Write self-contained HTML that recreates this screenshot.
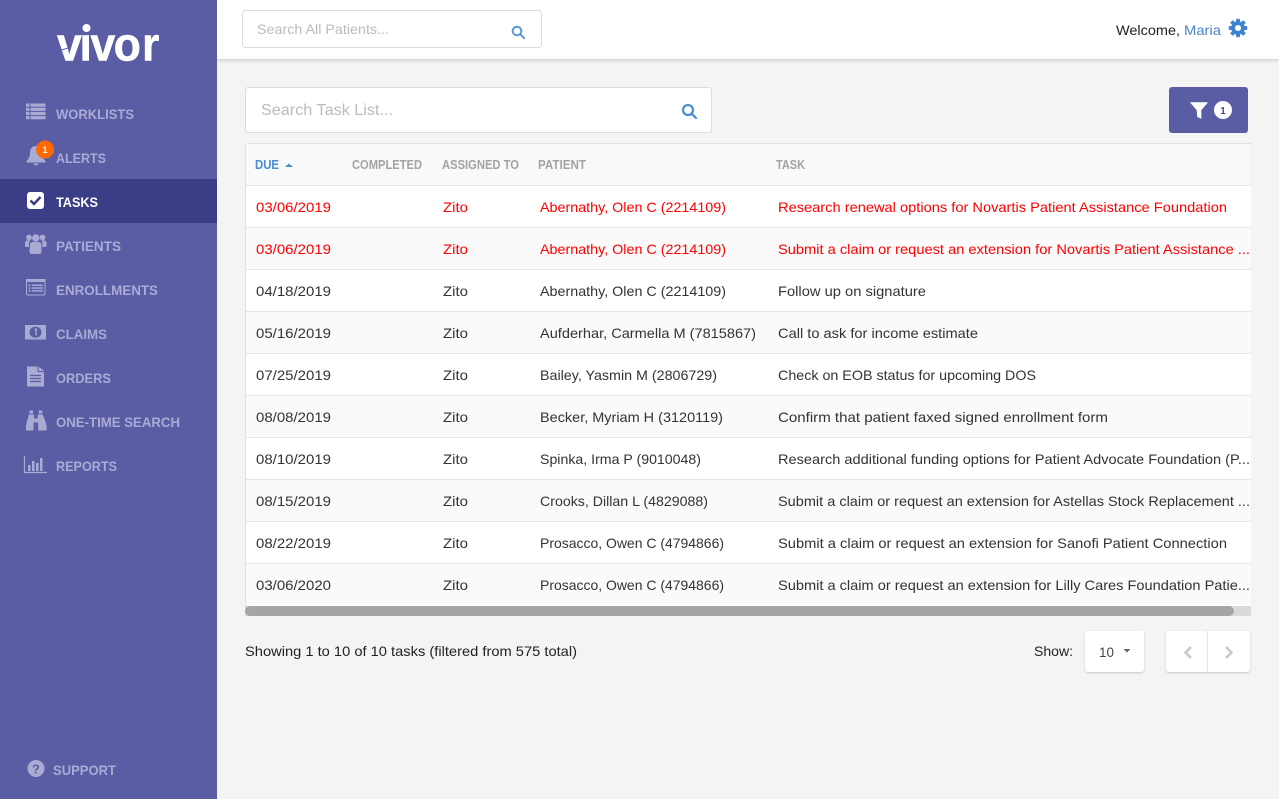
<!DOCTYPE html>
<html lang="en">
<head>
<meta charset="utf-8">
<title>Vivor Tasks</title>
<style>
html,body{margin:0;padding:0;width:1279px;height:799px;overflow:hidden;background:#f4f4f4}
svg{display:block;position:absolute;left:0;top:0}
text{font-family:"Liberation Sans",sans-serif;font-size:14px;fill:#333}
.nav{font-weight:bold;font-size:14px;fill:#a9abd4}
.th{font-weight:bold;font-size:13px;fill:#a3a3a3}
.r{fill:#f00}
</style>
</head>
<body>
<svg width="1279" height="799" viewBox="0 0 1279 799" xmlns="http://www.w3.org/2000/svg">
<defs>
<filter id="sh" x="-5%" y="-20%" width="110%" height="150%"><feDropShadow dx="0" dy="1" stdDeviation="2" flood-color="#000" flood-opacity=".2"/></filter>
<filter id="sh2" x="-20%" y="-20%" width="140%" height="140%"><feDropShadow dx="0" dy="1" stdDeviation="1" flood-color="#000" flood-opacity=".18"/></filter>
</defs>

<!-- top bar -->
<rect x="217" y="0" width="1062" height="59" fill="#fff" filter="url(#sh)"/>
<rect x="242.500" y="10.500" width="299" height="37" rx="3" fill="#fff" stroke="#dcdcdc"/>
<text x="257" y="34" textLength="132" lengthAdjust="spacingAndGlyphs" style="fill:#bbb">Search All Patients...</text>
<g fill="none" stroke="#5b9bd5" stroke-width="2"><circle cx="517" cy="31" r="4.300"/><path d="M520.200 34.200l4 4" stroke-linecap="round"/></g>
<text x="1116" y="35" textLength="64" lengthAdjust="spacingAndGlyphs" style="fill:#222">Welcome,</text>
<text x="1184" y="35" textLength="37" lengthAdjust="spacingAndGlyphs" style="fill:#4a86c5">Maria</text>
<g transform="translate(1238 28)">
  <g fill="#3f84cc"><circle r="6.800"/>
  <rect x="-2" y="-9.300" width="4" height="18.600" rx="1"/>
  <rect x="-2" y="-9.300" width="4" height="18.600" rx="1" transform="rotate(45)"/>
  <rect x="-2" y="-9.300" width="4" height="18.600" rx="1" transform="rotate(90)"/>
  <rect x="-2" y="-9.300" width="4" height="18.600" rx="1" transform="rotate(135)"/></g>
  <circle r="3" fill="#fff"/>
</g>

<!-- task search -->
<rect x="245.500" y="87.500" width="466" height="45" rx="3" fill="#fff" stroke="#dcdcdc"/>
<text x="261" y="115" textLength="132" lengthAdjust="spacingAndGlyphs" style="font-size:16px;fill:#bbb">Search Task List...</text>
<g fill="none" stroke="#4a8cd0" stroke-width="2.200"><circle cx="688" cy="110" r="5"/><path d="M691.800 113.800l4.200 4.200" stroke-linecap="round"/></g>

<!-- filter button -->
<rect x="1169" y="87" width="79" height="46" rx="3" fill="#5a5da4"/>
<path d="M1190.500 102.500h17l-6.500 7.500v8.500l-3.500-1.800-.5-6.700z" fill="#fff" stroke="#fff" stroke-width=".6" stroke-linejoin="round"/>
<circle cx="1223" cy="110" r="9" fill="#fff"/>
<text x="1223" y="114" text-anchor="middle" style="font-size:10px;font-weight:bold;fill:#4a4d8c">1</text>

<!-- table -->
<rect x="245.500" y="143.500" width="1010" height="463" rx="3" fill="#fff" stroke="#e2e2e2"/>
<rect x="246" y="144" width="1005" height="41" fill="#f8f9fb"/>
<rect x="246" y="228" width="1005" height="41" fill="#fafafa"/>
<rect x="246" y="312" width="1005" height="41" fill="#fafafa"/>
<rect x="246" y="396" width="1005" height="41" fill="#fafafa"/>
<rect x="246" y="480" width="1005" height="41" fill="#fafafa"/>
<rect x="246" y="564" width="1005" height="41" fill="#fafafa"/>
<g fill="#e6e6e6">
<rect x="246" y="185" width="1005" height="1"/><rect x="246" y="227" width="1005" height="1"/>
<rect x="246" y="269" width="1005" height="1"/><rect x="246" y="311" width="1005" height="1"/>
<rect x="246" y="353" width="1005" height="1"/><rect x="246" y="395" width="1005" height="1"/>
<rect x="246" y="437" width="1005" height="1"/><rect x="246" y="479" width="1005" height="1"/>
<rect x="246" y="521" width="1005" height="1"/><rect x="246" y="563" width="1005" height="1"/>
</g>
<rect x="1251" y="140" width="28" height="480" fill="#f4f4f4"/>

<text class="th" x="255" y="169" textLength="24" lengthAdjust="spacingAndGlyphs" style="fill:#4a8cd0">DUE</text>
<path d="M285 167h8l-4-3.500z" fill="#4a8cd0"/>
<text class="th" x="352" y="169" textLength="70" lengthAdjust="spacingAndGlyphs">COMPLETED</text>
<text class="th" x="442" y="169" textLength="77" lengthAdjust="spacingAndGlyphs">ASSIGNED TO</text>
<text class="th" x="538" y="169" textLength="48" lengthAdjust="spacingAndGlyphs">PATIENT</text>
<text class="th" x="776" y="169" textLength="29" lengthAdjust="spacingAndGlyphs">TASK</text>

<text class="r" x="256" y="212" textLength="75" lengthAdjust="spacingAndGlyphs">03/06/2019</text>
<text class="r" x="443" y="212" textLength="25" lengthAdjust="spacingAndGlyphs">Zito</text>
<text class="r" x="540" y="212" textLength="186" lengthAdjust="spacingAndGlyphs">Abernathy, Olen C (2214109)</text>
<text class="r" x="778" y="212" textLength="449" lengthAdjust="spacingAndGlyphs">Research renewal options for Novartis Patient Assistance Foundation</text>
<text class="r" x="256" y="254" textLength="75" lengthAdjust="spacingAndGlyphs">03/06/2019</text>
<text class="r" x="443" y="254" textLength="25" lengthAdjust="spacingAndGlyphs">Zito</text>
<text class="r" x="540" y="254" textLength="186" lengthAdjust="spacingAndGlyphs">Abernathy, Olen C (2214109)</text>
<text class="r" x="778" y="254" textLength="472" lengthAdjust="spacingAndGlyphs">Submit a claim or request an extension for Novartis Patient Assistance ...</text>

<text x="256" y="296" textLength="75" lengthAdjust="spacingAndGlyphs">04/18/2019</text>
<text x="443" y="296" textLength="25" lengthAdjust="spacingAndGlyphs">Zito</text>
<text x="540" y="296" textLength="186" lengthAdjust="spacingAndGlyphs">Abernathy, Olen C (2214109)</text>
<text x="778" y="296" textLength="148" lengthAdjust="spacingAndGlyphs">Follow up on signature</text>

<text x="256" y="338" textLength="75" lengthAdjust="spacingAndGlyphs">05/16/2019</text>
<text x="443" y="338" textLength="25" lengthAdjust="spacingAndGlyphs">Zito</text>
<text x="540" y="338" textLength="216" lengthAdjust="spacingAndGlyphs">Aufderhar, Carmella M (7815867)</text>
<text x="778" y="338" textLength="200" lengthAdjust="spacingAndGlyphs">Call to ask for income estimate</text>

<text x="256" y="380" textLength="75" lengthAdjust="spacingAndGlyphs">07/25/2019</text>
<text x="443" y="380" textLength="25" lengthAdjust="spacingAndGlyphs">Zito</text>
<text x="540" y="380" textLength="177" lengthAdjust="spacingAndGlyphs">Bailey, Yasmin M (2806729)</text>
<text x="778" y="380" textLength="258" lengthAdjust="spacingAndGlyphs">Check on EOB status for upcoming DOS</text>

<text x="256" y="422" textLength="75" lengthAdjust="spacingAndGlyphs">08/08/2019</text>
<text x="443" y="422" textLength="25" lengthAdjust="spacingAndGlyphs">Zito</text>
<text x="540" y="422" textLength="183" lengthAdjust="spacingAndGlyphs">Becker, Myriam H (3120119)</text>
<text x="778" y="422" textLength="330" lengthAdjust="spacingAndGlyphs">Confirm that patient faxed signed enrollment form</text>

<text x="256" y="464" textLength="75" lengthAdjust="spacingAndGlyphs">08/10/2019</text>
<text x="443" y="464" textLength="25" lengthAdjust="spacingAndGlyphs">Zito</text>
<text x="540" y="464" textLength="161" lengthAdjust="spacingAndGlyphs">Spinka, Irma P (9010048)</text>
<text x="778" y="464" textLength="472" lengthAdjust="spacingAndGlyphs">Research additional funding options for Patient Advocate Foundation (P...</text>

<text x="256" y="506" textLength="75" lengthAdjust="spacingAndGlyphs">08/15/2019</text>
<text x="443" y="506" textLength="25" lengthAdjust="spacingAndGlyphs">Zito</text>
<text x="540" y="506" textLength="168" lengthAdjust="spacingAndGlyphs">Crooks, Dillan L (4829088)</text>
<text x="778" y="506" textLength="472" lengthAdjust="spacingAndGlyphs">Submit a claim or request an extension for Astellas Stock Replacement ...</text>

<text x="256" y="548" textLength="75" lengthAdjust="spacingAndGlyphs">08/22/2019</text>
<text x="443" y="548" textLength="25" lengthAdjust="spacingAndGlyphs">Zito</text>
<text x="540" y="548" textLength="184" lengthAdjust="spacingAndGlyphs">Prosacco, Owen C (4794866)</text>
<text x="778" y="548" textLength="449" lengthAdjust="spacingAndGlyphs">Submit a claim or request an extension for Sanofi Patient Connection</text>

<text x="256" y="590" textLength="75" lengthAdjust="spacingAndGlyphs">03/06/2020</text>
<text x="443" y="590" textLength="25" lengthAdjust="spacingAndGlyphs">Zito</text>
<text x="540" y="590" textLength="184" lengthAdjust="spacingAndGlyphs">Prosacco, Owen C (4794866)</text>
<text x="778" y="590" textLength="472" lengthAdjust="spacingAndGlyphs">Submit a claim or request an extension for Lilly Cares Foundation Patie...</text>

<!-- scrollbar -->
<rect x="245" y="606" width="1006" height="10" fill="#dadada"/>
<rect x="245" y="606" width="989" height="10" rx="5" fill="#a5a5a5"/>

<!-- footer -->
<text x="245" y="656" textLength="332" lengthAdjust="spacingAndGlyphs" style="fill:#222">Showing 1 to 10 of 10 tasks (filtered from 575 total)</text>
<text x="1034" y="656" textLength="39" lengthAdjust="spacingAndGlyphs" style="fill:#222">Show:</text>
<rect x="1085" y="631" width="59" height="41" rx="3" fill="#fff" filter="url(#sh2)"/>
<text x="1099" y="657" textLength="15" lengthAdjust="spacingAndGlyphs" style="fill:#444">10</text>
<path d="M1123.500 649h7l-3.500 3.500z" fill="#666"/>
<rect x="1166" y="631" width="84" height="41" rx="3" fill="#fff" filter="url(#sh2)"/>
<rect x="1207" y="631" width="1" height="41" fill="#e4e4e4"/>
<path d="M1191 647l-5.500 5.500 5.500 5.500M1226 647l5.500 5.500-5.500 5.500" fill="none" stroke="#c8c8c8" stroke-width="2.600"/>

<!-- sidebar -->
<rect x="0" y="0" width="217" height="799" fill="#5a5da4"/>
<rect x="0" y="179" width="217" height="44" fill="#3c3d87"/>
<text transform="scale(.95 1)" x="60 83.700 95.300 119.600 149.500" y="60.500" style="font-size:47px;font-weight:bold;fill:#fff;stroke:#fff;stroke-width:.5">vivor</text>
<rect x="80" y="22" width="13" height="13" fill="#5a5da4"/>
<circle cx="86.500" cy="28" r="4" fill="#fff"/>
<path d="M60 50.500l8-2.500" stroke="#5a5da4" stroke-width="1"/>

<text class="nav" x="56" y="119" textLength="78" lengthAdjust="spacingAndGlyphs">WORKLISTS</text>
<text class="nav" x="56" y="163" textLength="50" lengthAdjust="spacingAndGlyphs">ALERTS</text>
<text class="nav" x="56" y="207" textLength="42" lengthAdjust="spacingAndGlyphs" style="fill:#fff">TASKS</text>
<text class="nav" x="56" y="251" textLength="65" lengthAdjust="spacingAndGlyphs">PATIENTS</text>
<text class="nav" x="56" y="295" textLength="102" lengthAdjust="spacingAndGlyphs">ENROLLMENTS</text>
<text class="nav" x="56" y="339" textLength="51" lengthAdjust="spacingAndGlyphs">CLAIMS</text>
<text class="nav" x="56" y="383" textLength="55" lengthAdjust="spacingAndGlyphs">ORDERS</text>
<text class="nav" x="56" y="427" textLength="124" lengthAdjust="spacingAndGlyphs">ONE-TIME SEARCH</text>
<text class="nav" x="56" y="471" textLength="61" lengthAdjust="spacingAndGlyphs">REPORTS</text>
<text class="nav" x="53" y="775" textLength="63" lengthAdjust="spacingAndGlyphs">SUPPORT</text>

<!-- worklists icon -->
<g fill="#a9abd4">
<rect x="26" y="103.500" width="3.500" height="3.200"/><rect x="30.500" y="103.500" width="15" height="3.200"/>
<rect x="26" y="107.700" width="3.500" height="3.200"/><rect x="30.500" y="107.700" width="15" height="3.200"/>
<rect x="26" y="111.900" width="3.500" height="3.200"/><rect x="30.500" y="111.900" width="15" height="3.200"/>
<rect x="26" y="116.100" width="3.500" height="3.200"/><rect x="30.500" y="116.100" width="15" height="3.200"/>
</g>
<!-- bell -->
<path d="M36 146c-4.500 0-6 3.500-6 7 0 4-1.500 6-3.500 8v1.500h19V161c-2-2-3.500-4-3.500-8 0-3.500-1.500-7-6-7zM33.500 163.500a2.600 2.600 0 0 0 5 0z" fill="#a9abd4"/>
<circle cx="45" cy="149.500" r="9" fill="#ff6a00"/>
<text x="45" y="153" text-anchor="middle" style="font-size:9px;font-weight:bold;fill:#fff">1</text>
<!-- tasks -->
<rect x="27" y="192" width="17" height="17" rx="3" fill="#fff"/>
<path d="M30.500 200.500l3.500 3.500 6.500-7" fill="none" stroke="#3c3d87" stroke-width="2.500"/>
<!-- patients -->
<g fill="#a9abd4">
<circle cx="29" cy="237.500" r="2.900"/><circle cx="42.500" cy="237.500" r="2.900"/><circle cx="35.800" cy="238" r="3.700"/>
<path d="M25 243c0-1.500 1-2.500 2.500-2.500h2.500c-.8 1-1 2-1 3.500v3h-2.500c-.8 0-1.500-.6-1.500-1.500zM46.500 243c0-1.500-1-2.500-2.500-2.500h-2.500c.8 1 1 2 1 3.500v3H45c.8 0 1.500-.6 1.500-1.500z"/>
<path d="M30 245c0-1.800 1.200-3 3-3h5.500c1.800 0 3 1.200 3 3v6.500c0 1.500-1 2.500-2.500 2.500h-7c-1.500 0-2.500-1-2.500-2.500z"/>
</g>
<!-- enrollments -->
<rect x="26.500" y="279.500" width="18.500" height="15.500" rx="1.500" fill="none" stroke="#a9abd4"/>
<g fill="#a9abd4">
<rect x="26" y="279" width="19.500" height="3"/>
<rect x="28.500" y="284.500" width="2" height="1.500"/><rect x="31.800" y="284.500" width="11" height="1.500"/>
<rect x="28.500" y="287.300" width="2" height="1.500"/><rect x="31.800" y="287.300" width="11" height="1.500"/>
<rect x="28.500" y="290.100" width="2" height="1.500"/><rect x="31.800" y="290.100" width="11" height="1.500"/>
</g>
<!-- claims -->
<rect x="25" y="325" width="21" height="14.500" fill="#a9abd4"/>
<ellipse cx="35.500" cy="332.200" rx="6" ry="5.500" fill="#5a5da4"/>
<path d="M34.500 329.800l1.600-.8v6.500" fill="none" stroke="#a9abd4" stroke-width="1.400"/>
<!-- orders -->
<path d="M27 366.500h10.500v5.500h6.500v14.500H27z" fill="#a9abd4"/>
<path d="M38.700 366.500l5.300 4.500h-5.300z" fill="#a9abd4"/>
<path d="M30 375.500h11M30 378.500h11M30 381.500h11" stroke="#5a5da4" stroke-width="1.200"/>
<!-- binoculars -->
<path d="M29.500 410.500h3.500v3h-3.500zM38.800 410.500h3.500v3h-3.500zM29 414.500h5v4h3.700v-4h5c1 3 4 9 4 12.500v3.500h-8.500v-8h-4.700v8H26V427c0-3.500 2-9.500 3-12.500z" fill="#a9abd4"/>
<!-- reports -->
<path d="M24.500 456v16.500H47" fill="none" stroke="#a9abd4" stroke-width="1.200"/>
<g fill="#a9abd4"><rect x="28" y="465" width="2.500" height="6"/><rect x="32" y="461" width="2.500" height="10"/><rect x="36" y="463" width="2.500" height="8"/><rect x="40" y="458" width="2.500" height="13"/></g>
<!-- support -->
<circle cx="36" cy="768.500" r="8.500" fill="#a9abd4"/>
<text x="36" y="773.500" text-anchor="middle" style="font-size:13px;font-weight:bold;fill:#5a5da4">?</text>
</svg>
</body>
</html>
